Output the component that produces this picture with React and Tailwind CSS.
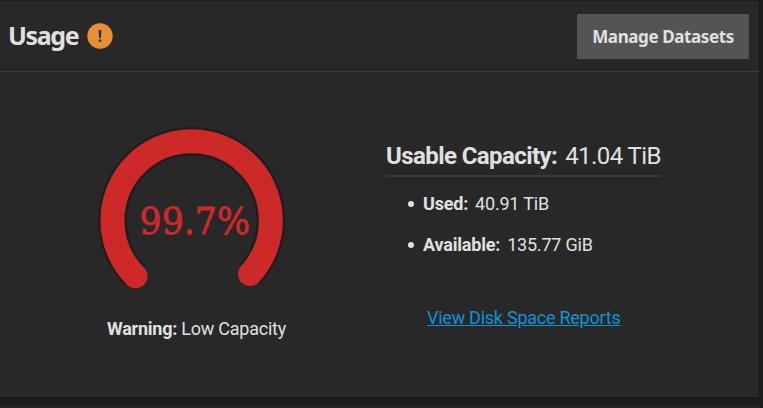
import React from 'react';

const capacity = {
    usable: '41.04 TiB',
    used: '40.91 TiB',
    available: '135.77 GiB',
    percent: '99.7%',
};

const Gauge = ({ label }) => {
    const arc = 'M135.5 276.3 A79.2 79.2 0 1 1 250 274';

    return (
        <svg width="192" height="176" viewBox="96 120 192 176" role="img" aria-label="Used capacity">
            {/* Track shows as a thin dark rim around the fill */}
            <path d={arc} fill="none" stroke="#1e1e1e" strokeWidth="28.5" />
            <path d={arc} fill="none" stroke="#ce2929" strokeWidth="24" strokeLinecap="round" />
            <text
                x="139.5"
                y="234"
                textLength="110.5"
                lengthAdjust="spacingAndGlyphs"
                fill="#ce2929"
                stroke="#ce2929"
                strokeWidth="0.8"
                className="font-['DejaVu_Serif',serif] text-[36.5px]"
            >
                {label}
            </text>
        </svg>
    );
};

const CardHeader = () => (
    <header className="flex h-[71px] items-center justify-between border-b border-[#383838] pr-[10px] pl-2">
        <div className="flex items-center">
            <h2 className="w-[79px] pb-px font-['Noto_Sans',sans-serif] text-[25px] leading-none font-bold tracking-[-1.4px]">Usage</h2>
            <svg width="26" height="26" viewBox="0 0 26 26" aria-hidden="true">
                <circle cx="13" cy="13" r="12.7" fill="#e68f37" />
                <path d="M11.7 7h2.6l-.4 8h-1.8zM11.8 16.5h2.4v2.3h-2.4z" fill="#282828" />
            </svg>
        </div>
        <button className="h-[45px] w-[172px] bg-[#545454] pt-[2px] font-['Noto_Sans',sans-serif] text-[17px] font-bold tracking-[-0.4px] whitespace-nowrap">
            Manage Datasets
        </button>
    </header>
);

const App = () => {
    return (
        <div className="flex h-[408px] w-[763px] flex-col gap-[9px] overflow-hidden bg-[#1e1e1e] pt-px pr-1 font-[Roboto,sans-serif] text-[#e0e0e0]">
            <section className="h-[396px] shrink-0 bg-[#282828] shadow-[0_1px_3px_#161616]">
                <CardHeader />

                <div className="flex">
                    <div className="w-[386px] pt-12 pl-24">
                        <Gauge label={capacity.percent} />
                        <p className="ml-[11px] mt-[22px] text-lg leading-[22px] tracking-[-0.24px]">
                            <strong>Warning:</strong> Low Capacity
                        </p>
                    </div>

                    <div className="w-[275px] pt-[70px]">
                        <h3 className="border-b-2 border-[#383838] pb-[5px] text-2xl leading-[28px] font-normal tracking-[-0.58px] whitespace-nowrap">
                            <strong className="mr-2">Usable Capacity:</strong>
                            {capacity.usable}
                        </h3>
                        <ul className="mt-4 list-none text-lg leading-[22px] tracking-[-0.2px]">
                            <li className="flex items-center pl-[22px]">
                                <span className="mr-[9px] size-[6px] rounded-full bg-[#e0e0e0]" />
                                <strong className="mr-[7px]">Used:</strong>
                                {capacity.used}
                            </li>
                            <li className="mt-[19px] flex items-center pl-[22px]">
                                <span className="mr-[9px] size-[6px] rounded-full bg-[#e0e0e0]" />
                                <strong className="mr-[7px]">Available:</strong>
                                {capacity.available}
                            </li>
                        </ul>
                        <a href="#reports" className="mt-[51px] ml-[41px] block w-fit text-lg leading-[22px] tracking-[-0.25px] text-[#0d94d6] underline">
                            View Disk Space Reports
                        </a>
                    </div>
                </div>
            </section>

            {/* Top edge of the next card */}
            <section className="h-8 shrink-0 bg-[#282828]" />
        </div>
    );
};

export default App;
